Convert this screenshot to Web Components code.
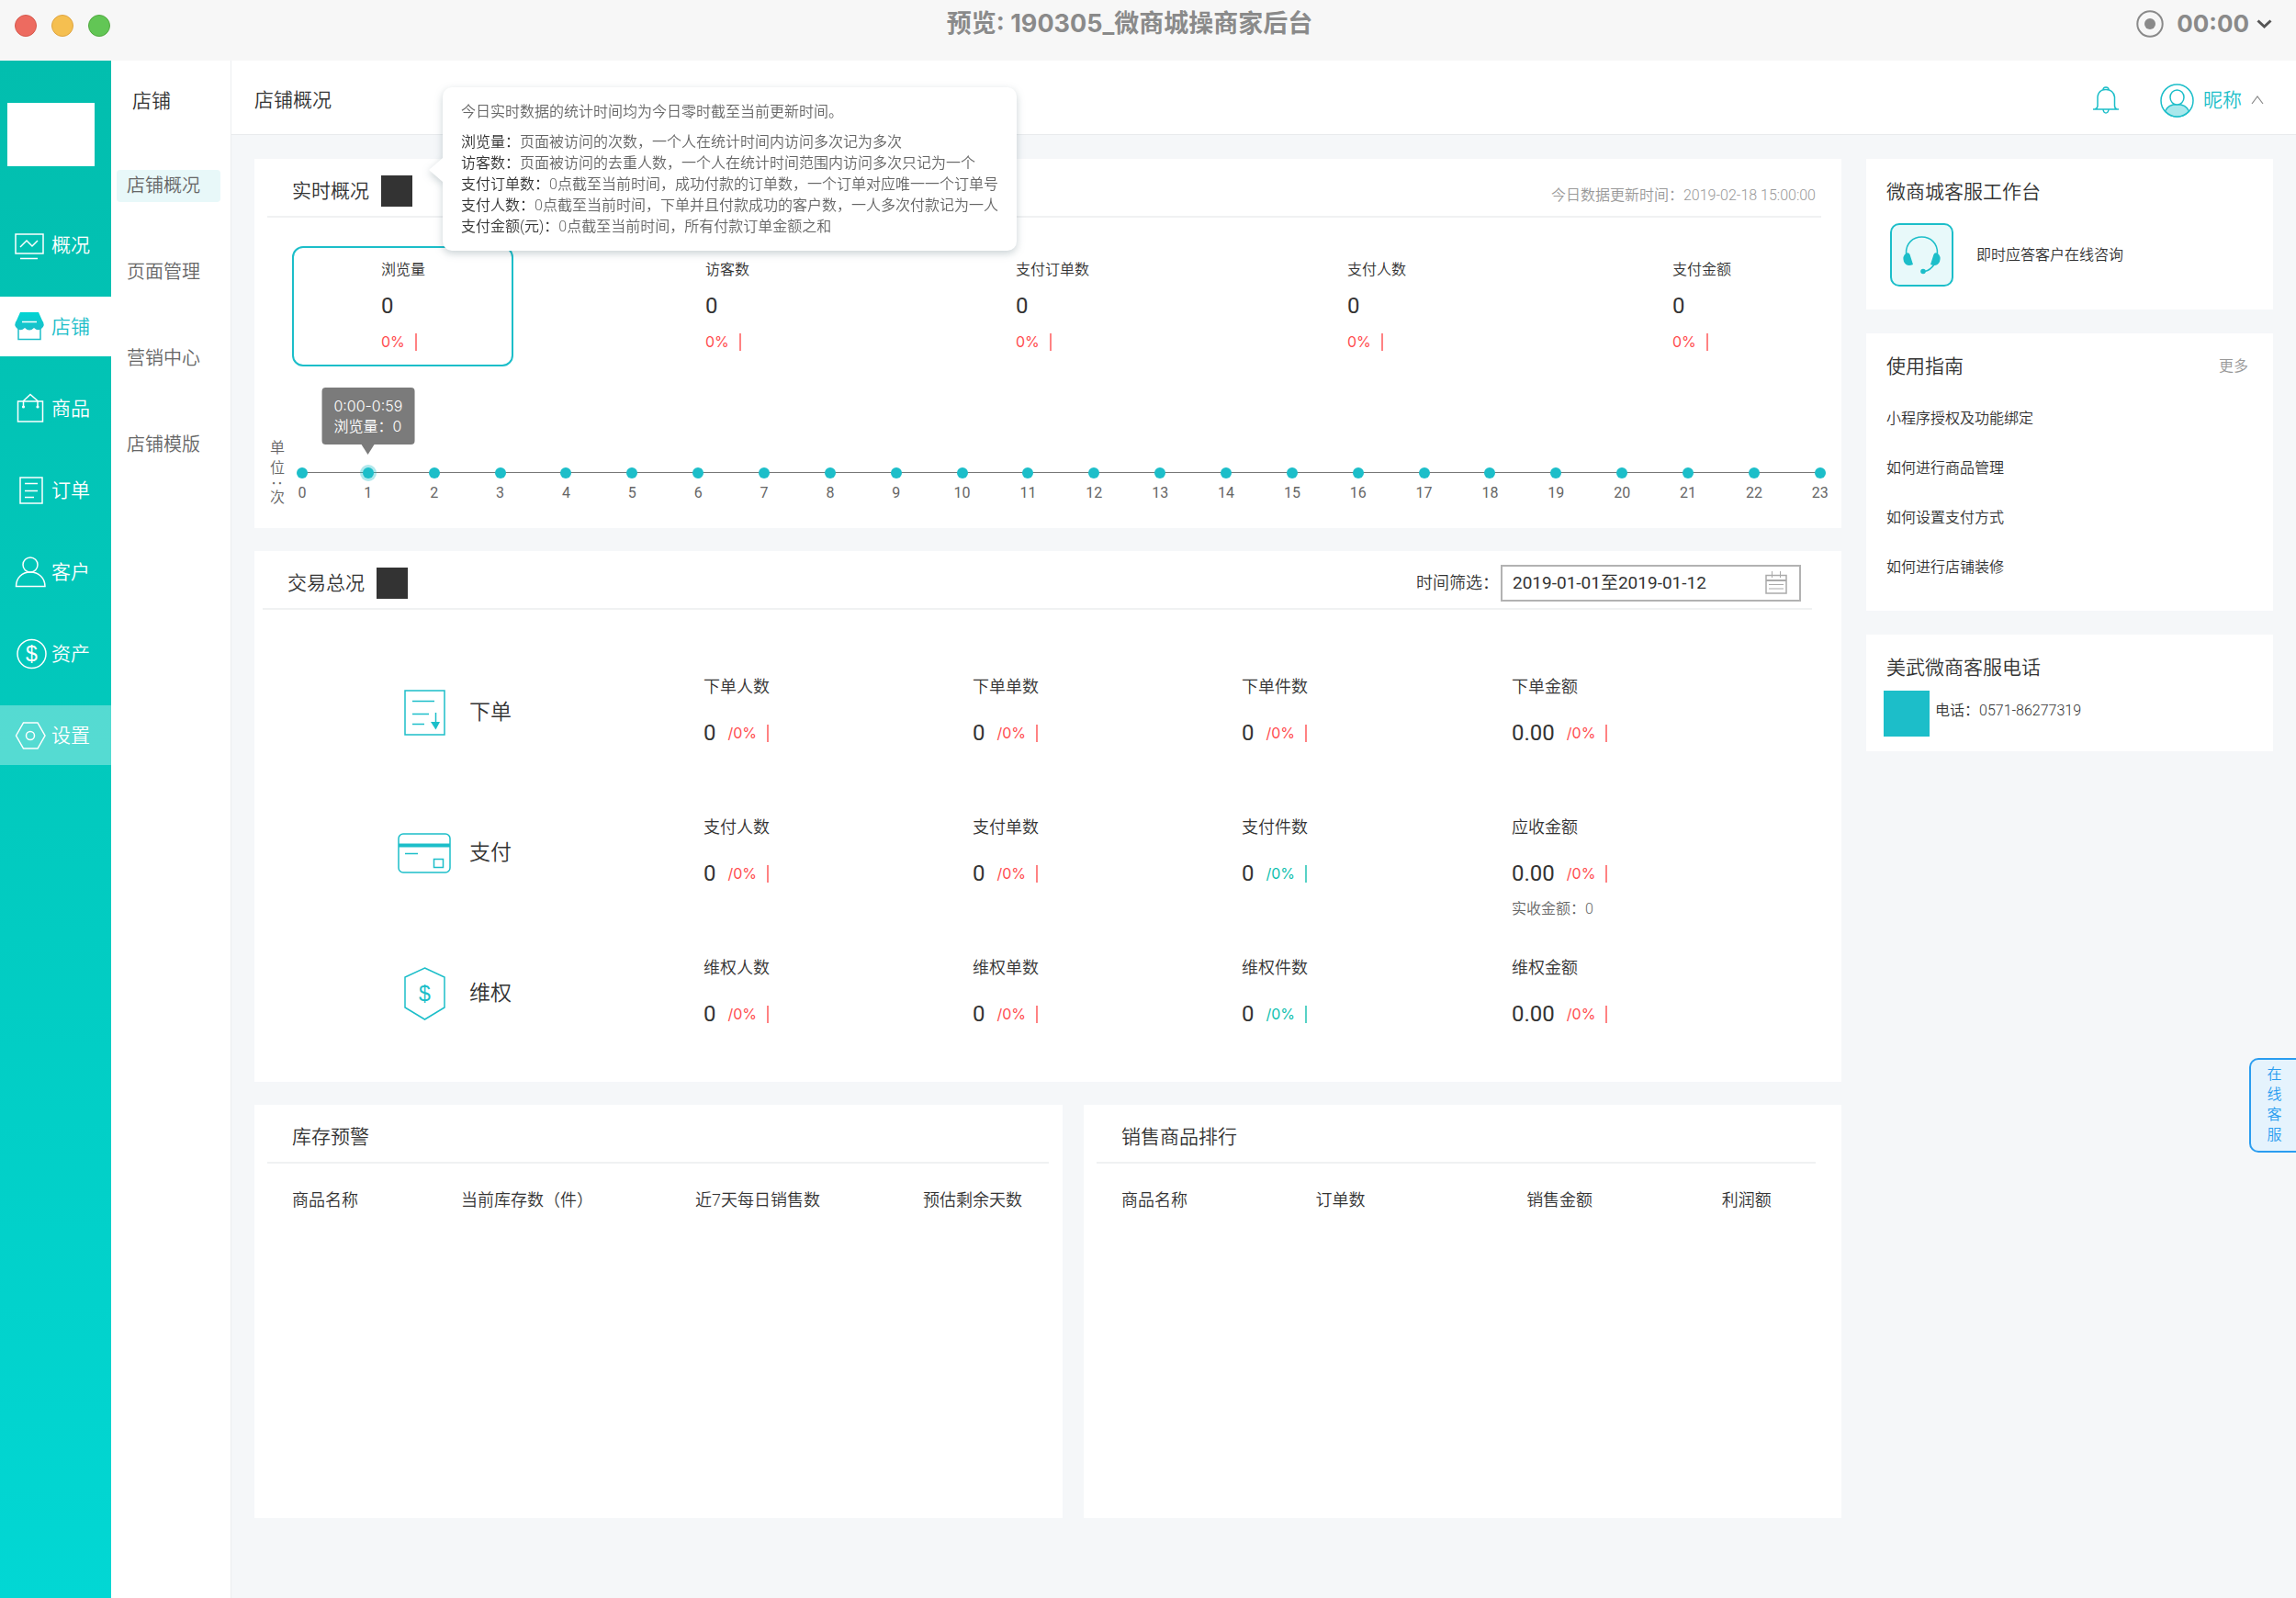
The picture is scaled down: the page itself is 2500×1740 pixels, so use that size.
<!DOCTYPE html>
<html lang="zh-CN">
<head>
<meta charset="utf-8">
<title>微商城商家后台</title>
<style>
  html, body { margin: 0; }
  body {
    --teal: #1cbec9; --ink: #333; --soft: #666; --mute: #999; --red: #ff4d4f; --green: #0fbfae;
    --line: #f0f1f2; --bg: #f5f7f9;
    --latin: Inter, "Noto Sans CJK SC", sans-serif;
    font-family: Roboto, "Noto Sans CJK SC", sans-serif;
    font-weight: 350; font-size: 16px; line-height: 22px; color: var(--ink); background: var(--bg);
  }
</style>
</head>
<body>
<shop-app></shop-app>
<script>
const define = (name, html, setup) => {
  const tpl = document.createElement('template');
  tpl.innerHTML = html;
  customElements.define(name, class extends HTMLElement {
    constructor() {
      super();
      this.attachShadow({ mode: 'open' }).appendChild(tpl.content.cloneNode(true));
    }
    connectedCallback() {
      if (setup && !this.ready) { this.ready = true; setup(this, this.shadowRoot); }
    }
  });
};

/* ---------- icons ---------- */
const ICONS = {
  chart: [32, 32, '<rect x="1" y="4" width="30" height="21"/><path d="M6 30.5H25M6 18l7-7 6 6 6-6"/>'],
  shop: [32, 32, '<defs><linearGradient id="g" x2="0" y2="1"><stop offset="0" stop-color="#00d5d3"/><stop offset="1" stop-color="#1cbec9"/></linearGradient></defs><path d="M4 16V29.500H28V16"/><path fill="url(#g)" stroke="none" d="M6 0H26L30 9Q34 14 29 18Q25 21 21 17Q16 22 11 17Q7 21 3 18Q-2 14 2 9Z"/><path stroke="#fff" d="M8 10.500H24"/>'],
  bag: [32, 32, '<rect x="3.500" y="8" width="27" height="22"/><path d="M9.500 14V7.500L17 .5L25 7.500V14"/><g fill="currentColor" stroke="none"><circle cx="9.500" cy="14" r="1.600"/><circle cx="25" cy="14" r="1.600"/></g>'],
  order: [32, 32, '<rect x="6" y="2" width="24" height="28"/><path d="M11 8.500H25M11 16.500H25M11 23.500H21"/>'],
  user: [34, 32, '<circle cx="17" cy="8" r="8"/><path d="M1.500 31.500C1.500 22 8 16 17 16S33 22 33 31.500Z"/>'],
  money: [34, 34, '<circle cx="18.500" cy="17" r="15.500"/><text x="18.500" y="25" text-anchor="middle" font-family="Liberation Sans" font-size="23" fill="currentColor" stroke="none">$</text>'],
  gear: [34, 32, '<path d="M1.500 16L9.500 2H25L33 16L25 30H9.500Z"/><circle cx="17" cy="16" r="4.500"/>'],
  orderDown: [45, 50, '<rect x="1" y="1" width="43" height="48"/><path d="M9 12.500H33M9 26.500H27M9 37.500H22M34.500 25V38"/><path fill="currentColor" stroke="none" d="M29 35H39L34.500 43.500Z"/>'],
  card: [58, 44, '<rect x="1" y="1" width="56" height="42" rx="5"/><path stroke-width="4" d="M1 13.500H57"/><path d="M8 22.500H22"/><rect x="39.500" y="28.500" width="10" height="9"/>'],
  shield: [45, 58, '<path d="M22.500 1L44 11V44L22.500 57L1 44V11Z"/><text x="22.500" y="37" text-anchor="middle" font-family="Liberation Sans" font-size="23" fill="currentColor" stroke="none">$</text>'],
  bell: [30, 30, '<path d="M1 25H29M3 25Q6 24 6 21V11.500Q7 3.500 15 3.500T24.500 11.500V21Q24.500 24 27 25M12 4Q12 1 15 1T18 4M12 25Q12.500 29 15 29T18 25"/>'],
  avatar: [37, 37, '<circle cx="18.500" cy="18.500" r="17.500"/><path fill="#a9e8ec" d="M5.500 30Q9 22.500 18.500 22.500T31.500 30Q26 36 18.500 36T5.500 30Z"/><ellipse cx="18.500" cy="15" rx="7.500" ry="8" fill="#fff"/>'],
  up: [14, 10, '<path stroke-width="1.200" d="M1 9L7 1L13 9"/>'],
  down: [17, 10, '<path stroke-width="3" d="M1.500 1.500L8.500 8L15.500 1.500"/>'],
  record: [30, 30, '<circle cx="15" cy="15" r="13.700" stroke-width="2"/><circle cx="15" cy="15" r="6" fill="currentColor" stroke="none"/>'],
  calendar: [24, 26, '<path d="M1 4.500H23V24H1Z"/><path stroke-width="2" d="M1 10H23"/><path d="M7.500 0V7M16.500 0V7M4 14.500H20M4 19H20" stroke-width="1"/>'],
  headset: [41, 41, '<path d="M3.500 19C3 8 11 1 20.500 1S38 8 37.500 19M34 31Q30 37 24 38.500"/><g fill="currentColor" stroke="none"><path d="M3.500 18.500Q6.500 17.500 7.500 20L11 31Q4 34 1 28Q-1 22 3.500 18.500ZM37.500 18.500Q34.500 17.500 33.500 20L30 31Q37 34 40 28Q42 22 37.500 18.500Z"/><circle cx="22" cy="38.500" r="2.800"/></g>']
};
define('app-icon', '<style>:host{display:block;flex:none}svg{display:block;overflow:visible}</style>', (el, root) => {
  const [w, h, body] = ICONS[el.getAttribute('name')];
  root.innerHTML += `<svg width="${w}" height="${h}" viewBox="0 0 ${w} ${h}" fill="none" stroke="currentColor" stroke-width="1.500" aria-hidden="true">${body}</svg>`;
});

/* ---------- window bar ---------- */
define('window-bar', `
<style>
  :host { display: flex; align-items: flex-start; height: 66px; box-sizing: border-box; padding: 11px 26px 0 16px; background: #f7f7f7; color: #8a8a8a; font: 700 26px/30px var(--latin); }
  .lights { display: flex; gap: 16px; padding: 5px 14px 0 0; }
  i { width: 22px; height: 22px; border-radius: 50%; border: 1px solid #d6594d; background: #ed6b60; }
  i:nth-child(2) { border-color: #dfa440; background: #f5bf50; }
  i:nth-child(3) { border-color: #52a941; background: #62c655; }
  h1 { flex: 1; margin: 0; text-align: center; font: inherit; font-size: 27px; }
  .timer { display: flex; align-items: center; }
  .timer span { margin: 0 8px 0 14px; }
  app-icon:last-child { color: #555; }
</style>
<div class="lights"><i></i><i></i><i></i></div>
<h1>预览: 190305_微商城操商家后台</h1>
<div class="timer"><app-icon name="record"></app-icon><span>00:00</span><app-icon name="down"></app-icon></div>`);

/* ---------- primary navigation ---------- */
define('nav-item', `
<style>
  :host { display: block; color: #fff; font-size: 21px; }
  a { display: flex; align-items: center; height: 65px; padding-left: 16px; color: inherit; text-decoration: none; }
  .pic { width: 40px; }
  :host([current]) { background: #fff; color: var(--teal); }
  :host([hover]) { background: rgba(255,255,255,.33); }
</style>
<a href="#"><span class="pic"></span><slot></slot></a>`, (el, root) => {
  const icon = document.createElement('app-icon');
  icon.setAttribute('name', el.getAttribute('icon'));
  root.querySelector('.pic').append(icon);
});

define('main-nav', `
<style>
  :host { display: block; width: 121px; flex: none; padding-top: 46px; box-sizing: border-box; background: linear-gradient(#02beae, #02c9bd 45%, #02d7d4); }
  .logo { width: 95px; height: 69px; margin: 0 0 53px 8px; background: #fff; }
  nav { display: flex; flex-direction: column; gap: 24px; }
</style>
<div class="logo"></div>
<nav>
  <nav-item icon="chart">概况</nav-item>
  <nav-item icon="shop" current>店铺</nav-item>
  <nav-item icon="bag">商品</nav-item>
  <nav-item icon="order">订单</nav-item>
  <nav-item icon="user">客户</nav-item>
  <nav-item icon="money">资产</nav-item>
  <nav-item icon="gear" hover>设置</nav-item>
</nav>`);

define('sub-nav', `
<style>
  :host { display: block; width: 131px; flex: none; box-sizing: border-box; background: #fff; border-right: 1px solid #eceef0; }
  h2 { margin: 0; padding: 30px 0 0 23px; font: inherit; font-size: 21px; line-height: 28px; }
  nav { display: flex; flex-direction: column; gap: 59px; padding: 61px 11px 0 6px; }
  a { padding: 0 0 0 11px; border-radius: 4px; font-size: 20px; line-height: 35px; color: var(--soft); text-decoration: none; }
  a[aria-current] { background: #e8f8f9; }
</style>
<h2>店铺</h2>
<nav><a href="#" aria-current="page">店铺概况</a><a href="#">页面管理</a><a href="#">营销中心</a><a href="#">店铺模版</a></nav>`);

/* ---------- page header ---------- */
define('page-header', `
<style>
  :host { display: flex; align-items: center; height: 81px; box-sizing: border-box; padding: 6px 35px 0 25px; background: #fff; border-bottom: 1px solid #e9ebed; font-size: 21px; line-height: 28px; }
  h2 { flex: 1; margin: 0; font: inherit; }
  button { display: flex; align-items: center; gap: 10px; margin: 0 0 0 44px; padding: 0; border: 0; background: none; font: inherit; color: var(--teal); }
  .caret { color: #888; }
</style>
<h2>店铺概况</h2>
<button aria-label="消息"><app-icon name="bell"></app-icon></button>
<button><app-icon name="avatar"></app-icon>昵称<app-icon class="caret" name="up"></app-icon></button>`);

/* ---------- cards ---------- */
define('panel-card', `
<style>
  :host { display: block; background: #fff; min-width: 0; }
  header { display: flex; align-items: center; height: 54px; margin: 0 var(--inset-end, 15px) 0 var(--inset, 14px); padding: 8px 0 0 27px; border-bottom: 2px solid var(--line); }
  h3 { margin: 0 13px 0 0; font: inherit; font-size: 21px; line-height: 28px; }
  .mark { width: 34px; height: 34px; background: #333; display: none; }
  :host([mark]) .mark { display: block; }
  .extra { flex: 1; align-self: stretch; display: flex; justify-content: flex-end; }
</style>
<header><h3></h3><span class="mark"></span><div class="extra"><slot name="extra"></slot></div></header>
<slot></slot>`, (el, root) => { root.querySelector('h3').textContent = el.getAttribute('heading'); });

define('rate-mark', `
<style>
  :host { display: inline-flex; align-items: center; gap: 11px; color: var(--red); font-family: var(--latin); font-weight: 400; }
  :host([down]) { color: var(--green); }
  i { width: 2px; height: 19px; background: currentColor; opacity: .7; }
</style><slot></slot><i></i>`);

define('stat-tile', `
<style>
  :host { display: flex; flex-direction: column; gap: 12px; width: 241px; height: 131px; box-sizing: border-box; padding: 13px 0 0 95px; border: 2px solid transparent; border-radius: 12px; }
  :host([selected]) { border-color: var(--teal); }
  b { font-weight: 400; font-size: 24px; line-height: 32px; }
  rate-mark { line-height: 22px; }
</style>
<span><slot></slot></span><b>0</b><rate-mark>0%</rate-mark>`);

define('hour-axis', `
<style>
  :host { display: flex; gap: 7px; padding: 78px 11px 22px 17px; color: var(--soft); }
  .unit { display: flex; flex-direction: column; width: 16px; }
  .unit .colon { writing-mode: vertical-rl; height: 10px; line-height: 16px; text-align: center; font-weight: 500; }
  ol { position: relative; flex: 1; display: flex; justify-content: space-between; margin: 0; padding: 29px 0 0; list-style: none; }
  ol::before { content: ""; position: absolute; left: 12px; right: 12px; top: 37px; height: 1px; background: #777; }
  li { position: relative; width: 24px; text-align: center; line-height: 24px; font-weight: 400; }
  li::before { content: ""; display: block; width: 12px; height: 12px; margin: 3px auto 4px; border-radius: 50%; background: var(--teal); }
  li.on::before { box-shadow: 0 0 0 3px rgba(28,190,201,.35); }
  .tip { position: absolute; left: 50%; bottom: 69px; transform: translateX(-50%); padding: 9px 13px; border-radius: 4px; background: #7b7b7b; color: #fff; line-height: 22px; text-align: left; white-space: nowrap; font-family: var(--latin); font-weight: 350; }
  .tip::after { content: ""; position: absolute; left: 50%; top: 100%; margin-left: -7px; border: 7px solid transparent; border-top: 11px solid #7b7b7b; border-bottom: 0; }
</style>
<div class="unit"><span>单</span><span>位</span><span class="colon">:</span><span>次</span></div>
<ol></ol>`, (el, root) => {
  root.querySelector('ol').innerHTML = Array.from({ length: 24 }, (_, h) =>
    h === 1 ? '<li class="on">1<div class="tip">0:00-0:59<br>浏览量：0</div></li>' : `<li>${h}</li>`).join('');
});

define('date-filter', `
<style>
  :host { display: flex; align-items: center; gap: 2px; font-size: 18px; }
  .box { display: flex; align-items: center; width: 327px; height: 40px; box-sizing: border-box; padding: 0 13px 0 11px; border: 2px solid #b2b2b2; margin-right: 12px; }
  input { flex: 1; min-width: 0; padding: 0; border: 0; outline: 0; background: none; font: inherit; font-size: 19px; font-weight: 400; color: inherit; }
  app-icon { color: #aaa; }
</style>
<label for="range">时间筛选：</label>
<div class="box"><input id="range" value="2019-01-01至2019-01-12"><app-icon name="calendar"></app-icon></div>`);

define('metric-cell', `
<style>
  :host { display: flex; flex-direction: column; }
  .name { font-size: 18px; }
  .value { display: flex; align-items: center; gap: 13px; margin: 23px 0 12px; line-height: 32px; }
  b { font-weight: 400; font-size: 24px; }
  small { font-size: 16px; color: var(--soft); }
</style>
<span class="name"></span>
<div class="value"><b></b><rate-mark>/0%</rate-mark></div>
<small><slot></slot></small>`, (el, root) => {
  root.querySelector('.name').textContent = el.getAttribute('name');
  root.querySelector('b').textContent = el.getAttribute('value') || '0';
  root.querySelector('rate-mark').toggleAttribute('down', el.hasAttribute('down'));
});

define('metric-row', `
<style>
  :host { display: grid; grid-template-columns: 489fr 293fr 293fr 294fr 359fr; min-height: 112px; }
  .head { display: flex; align-items: center; gap: 20px; height: 77px; padding-left: 156px; font-size: 23px; }
  .pic { display: flex; justify-content: center; width: 58px; color: var(--teal); }
</style>
<div class="head"><span class="pic"></span><span class="title"></span></div><slot></slot>`, (el, root) => {
  const icon = document.createElement('app-icon');
  icon.setAttribute('name', el.getAttribute('icon'));
  root.querySelector('.pic').append(icon);
  root.querySelector('.title').textContent = el.getAttribute('heading');
});

define('list-table', `
<style>
  :host { display: block; padding: 28px 0 0 41px; }
  table, thead { display: block; }
  tr { display: grid; grid-template-columns: var(--cols); }
  th { padding: 0; text-align: left; font-weight: inherit; font-size: 18px; line-height: 24px; white-space: nowrap; }
</style>
<table><thead><tr></tr></thead></table>`, (el, root) => {
  root.querySelector('tr').innerHTML = el.getAttribute('columns').split('|').map(c => `<th scope="col">${c}</th>`).join('');
});

define('side-card', `
<style>
  :host { display: block; background: #fff; padding: 22px 0 var(--end, 25px); }
  header { display: flex; align-items: center; justify-content: space-between; padding: 0 27px 0 22px; line-height: 28px; }
  h3 { margin: 0; font: inherit; font-size: 21px; line-height: 28px; }
</style>
<header><h3></h3><slot name="more"></slot></header>
<slot></slot>`, (el, root) => { root.querySelector('h3').textContent = el.getAttribute('heading'); });

define('info-popover', `
<style>
  :host { display: block; box-sizing: border-box; padding: 15px 17px 15px 20px; background: #fff; border-radius: 10px; filter: drop-shadow(0 3px 4px rgba(60,90,100,.28)); line-height: 23px; color: var(--soft); white-space: nowrap; }
  :host::before { content: ""; position: absolute; right: 100%; top: 77px; border: 13px solid transparent; border-right: 15px solid #fff; border-left: 0; }
  p { margin: 0 0 10px; }
  dl, dd { margin: 0; }
  dl div { display: flex; }
  dt { color: var(--ink); }
</style>
<p>今日实时数据的统计时间均为今日零时截至当前更新时间。</p>
<dl>
  <div><dt>浏览量：</dt><dd>页面被访问的次数，一个人在统计时间内访问多次记为多次</dd></div>
  <div><dt>访客数：</dt><dd>页面被访问的去重人数，一个人在统计时间范围内访问多次只记为一个</dd></div>
  <div><dt>支付订单数：</dt><dd>0点截至当前时间，成功付款的订单数，一个订单对应唯一一个订单号</dd></div>
  <div><dt>支付人数：</dt><dd>0点截至当前时间，下单并且付款成功的客户数，一人多次付款记为一人</dd></div>
  <div><dt>支付金额(元)：</dt><dd>0点截至当前时间，所有付款订单金额之和</dd></div>
</dl>`);

define('service-tab', `
<style>
  :host { position: fixed; right: 0; top: 1152px; }
  button { display: block; width: 51px; padding: 5px 15px 6px 17px; border: 2px solid #2a9df0; border-right: 0; border-radius: 10px 0 0 10px; background: #e5f3fd; color: #2a9df0; font: inherit; line-height: 22px; }
  span { display: block; }
</style>
<button><span>在</span><span>线</span><span>客</span><span>服</span></button>`);

/* ---------- page ---------- */
define('shop-app', `
<style>
  :host { display: flex; flex-direction: column; min-height: 100vh; }
  .shell { flex: 1; display: flex; }
  .page { flex: 1; min-width: 0; }
  .content { display: grid; grid-template-columns: minmax(0, 1fr) 443px; gap: 27px; padding: 26px 25px; }
  .main, aside { display: flex; flex-direction: column; gap: 25px; min-width: 0; }
  aside { gap: 26px; }
  .live { position: relative; }
  info-popover { position: absolute; left: 205px; top: -78px; width: 625px; z-index: 2; }
  .updated { align-self: flex-end; margin: 0 6px 10px 0; line-height: 24px; color: var(--mute); }
  .stats { display: grid; grid-template-columns: 353fr 338fr 361fr 354fr 241fr; padding: 31px 40px 0 41px; }
  .rows { display: flex; flex-direction: column; gap: 41px; padding: 73px 0 23px; }
  .pair { display: grid; grid-template-columns: 880fr 825fr; gap: 23px; min-height: 450px; }
  .chat { display: flex; align-items: center; gap: 25px; padding: 20px 26px 0; }
  .badge { display: flex; align-items: center; justify-content: center; width: 69px; height: 69px; box-sizing: border-box; border: 2px solid var(--teal); border-radius: 10px; background: #e8f9fa; color: var(--teal); }
  ul { display: flex; flex-direction: column; gap: 32px; margin: 0; padding: 32px 22px 0; list-style: none; }
  a { color: inherit; text-decoration: none; }
  a[slot=more] { color: var(--mute); }
  .phone { display: flex; gap: 6px; padding: 11px 19px 0; line-height: 44px; }
  .phone i { width: 50px; height: 50px; background: var(--teal); }
</style>
<window-bar></window-bar>
<div class="shell">
  <main-nav></main-nav>
  <sub-nav></sub-nav>
  <div class="page">
    <page-header></page-header>
    <div class="content">
      <div class="main">
        <div class="live">
          <panel-card heading="实时概况" mark style="--inset-end:22px">
            <span slot="extra" class="updated">今日数据更新时间：2019-02-18 15:00:00</span>
            <div class="stats">
              <stat-tile selected>浏览量</stat-tile><stat-tile>访客数</stat-tile><stat-tile>支付订单数</stat-tile><stat-tile>支付人数</stat-tile><stat-tile>支付金额</stat-tile>
            </div>
            <hour-axis></hour-axis>
          </panel-card>
          <info-popover></info-popover>
        </div>
        <panel-card heading="交易总况" mark style="--inset:9px;--inset-end:32px">
          <date-filter slot="extra"></date-filter>
          <div class="rows">
            <metric-row icon="orderDown" heading="下单">
              <metric-cell name="下单人数"></metric-cell><metric-cell name="下单单数"></metric-cell><metric-cell name="下单件数"></metric-cell><metric-cell name="下单金额" value="0.00"></metric-cell>
            </metric-row>
            <metric-row icon="card" heading="支付">
              <metric-cell name="支付人数"></metric-cell><metric-cell name="支付单数"></metric-cell><metric-cell name="支付件数" down></metric-cell><metric-cell name="应收金额" value="0.00">实收金额：0</metric-cell>
            </metric-row>
            <metric-row icon="shield" heading="维权">
              <metric-cell name="维权人数"></metric-cell><metric-cell name="维权单数"></metric-cell><metric-cell name="维权件数" down></metric-cell><metric-cell name="维权金额" value="0.00"></metric-cell>
            </metric-row>
          </div>
        </panel-card>
        <div class="pair">
          <panel-card heading="库存预警"><list-table style="--cols:184fr 255fr 248fr 152fr" columns="商品名称|当前库存数（件）|近7天每日销售数|预估剩余天数"></list-table></panel-card>
          <panel-card heading="销售商品排行" style="--inset-end:28px"><list-table style="--cols:211fr 229fr 212fr 130fr" columns="商品名称|订单数|销售金额|利润额"></list-table></panel-card>
        </div>
      </div>
      <aside>
        <side-card heading="微商城客服工作台"><div class="chat"><span class="badge"><app-icon name="headset"></app-icon></span>即时应答客户在线咨询</div></side-card>
        <side-card heading="使用指南" style="--end:36px">
          <a slot="more" href="#">更多</a>
          <ul><li><a href="#">小程序授权及功能绑定</a></li><li><a href="#">如何进行商品管理</a></li><li><a href="#">如何设置支付方式</a></li><li><a href="#">如何进行店铺装修</a></li></ul>
        </side-card>
        <side-card heading="美武微商客服电话" style="--end:16px"><div class="phone"><i></i>电话：0571-86277319</div></side-card>
      </aside>
    </div>
  </div>
</div>
<service-tab></service-tab>`);
</script>
</body>
</html>
